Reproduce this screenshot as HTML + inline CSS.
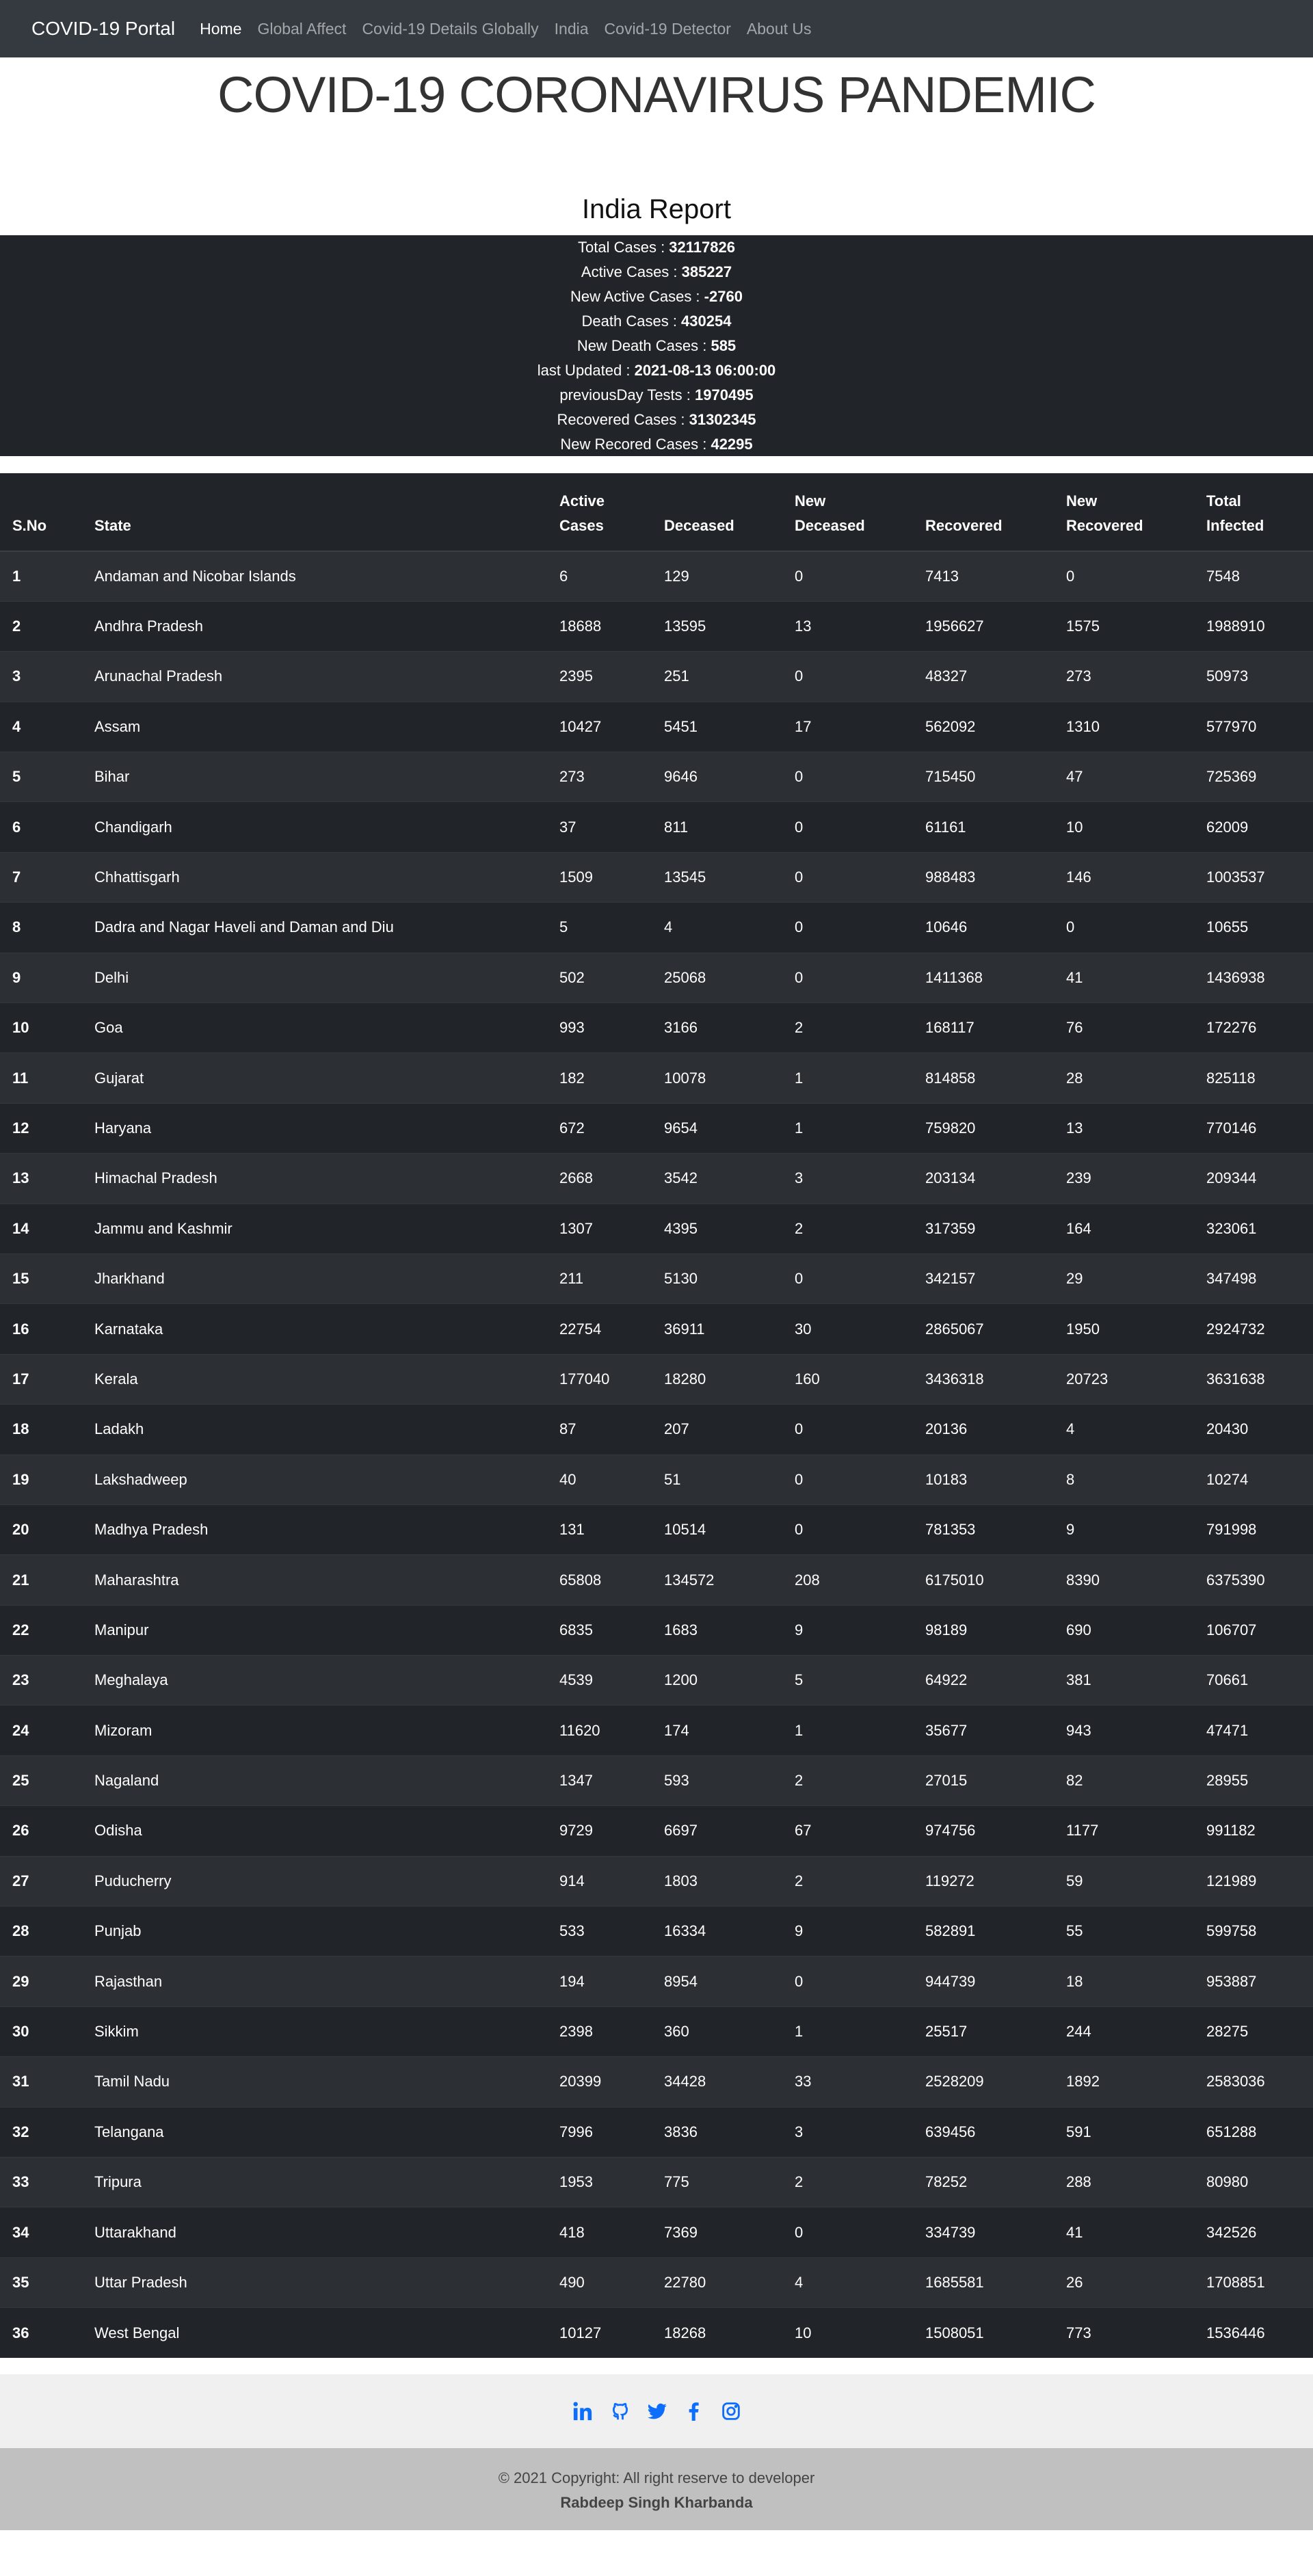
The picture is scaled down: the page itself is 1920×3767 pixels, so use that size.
<!DOCTYPE html>
<html><head><meta charset="utf-8"><style>
*{box-sizing:border-box;margin:0;padding:0}
body{width:1920px;height:3767px;background:#fff;font-family:"Liberation Sans",sans-serif;overflow:hidden}
nav{height:84px;background:#343a40;display:flex;align-items:center;padding-left:46px}
nav .brand{color:#fff;font-size:28px;margin-right:36px}
nav a{color:rgba(255,255,255,.55);font-size:23px;margin-right:23px;text-decoration:none}
nav a.act{color:#fff}
h1{font-weight:300;text-align:center;font-size:74px;color:#333;position:absolute;top:96px;left:0;width:1920px;letter-spacing:-1px}
h2{position:absolute;top:284px;width:1920px;text-align:center;font-weight:500;font-size:40px;color:#111}
.stats{position:absolute;top:344px;width:1920px;height:323px;background:#212529;color:#fff;text-align:center;font-size:22px;line-height:36px}
table{position:absolute;top:692px;left:0;width:1920px;border-collapse:collapse;table-layout:fixed;background:#212529;color:#fff;font-size:22px}
th{text-align:left;vertical-align:bottom;height:114px;padding:0 0 18px 18px;line-height:36px;font-size:22px;border-bottom:2px solid #3a3f44}
td{height:73.4px;padding:0 0 0 18px;border-top:1px solid #32383e}
td:first-child{font-weight:bold}
tbody tr:nth-child(odd){background:#2c3034}
.f1{position:absolute;top:3472px;width:1920px;height:108px;background:#f0f0f0;display:flex;justify-content:center;align-items:center;gap:26px}
.f2{position:absolute;top:3580px;width:1920px;height:120px;background:#c0c0c0;text-align:center;color:#444;font-size:22px;padding-top:26px;line-height:36px}
</style></head><body>
<nav><span class="brand">COVID-19 Portal</span><a class="act">Home</a><a>Global Affect</a><a>Covid-19 Details Globally</a><a>India</a><a>Covid-19 Detector</a><a>About Us</a></nav>
<h1>COVID-19 CORONAVIRUS PANDEMIC</h1>
<h2>India Report</h2>
<div class="stats">
<div>Total Cases : <b>32117826</b></div><div>Active Cases : <b>385227</b></div><div>New Active Cases : <b>-2760</b></div><div>Death Cases : <b>430254</b></div><div>New Death Cases : <b>585</b></div><div>last Updated : <b>2021-08-13 06:00:00</b></div><div>previousDay Tests : <b>1970495</b></div><div>Recovered Cases : <b>31302345</b></div><div>New Recored Cases : <b>42295</b></div>
</div>
<table><colgroup><col style="width:120px"><col style="width:680px"><col style="width:153px"><col style="width:191px"><col style="width:191px"><col style="width:206px"><col style="width:205px"><col style="width:174px"></colgroup>
<thead><tr><th>S.No</th><th>State</th><th>Active<br>Cases</th><th>Deceased</th><th>New<br>Deceased</th><th>Recovered</th><th>New<br>Recovered</th><th>Total<br>Infected</th></tr></thead>
<tbody>
<tr><td>1</td><td>Andaman and Nicobar Islands</td><td>6</td><td>129</td><td>0</td><td>7413</td><td>0</td><td>7548</td></tr>
<tr><td>2</td><td>Andhra Pradesh</td><td>18688</td><td>13595</td><td>13</td><td>1956627</td><td>1575</td><td>1988910</td></tr>
<tr><td>3</td><td>Arunachal Pradesh</td><td>2395</td><td>251</td><td>0</td><td>48327</td><td>273</td><td>50973</td></tr>
<tr><td>4</td><td>Assam</td><td>10427</td><td>5451</td><td>17</td><td>562092</td><td>1310</td><td>577970</td></tr>
<tr><td>5</td><td>Bihar</td><td>273</td><td>9646</td><td>0</td><td>715450</td><td>47</td><td>725369</td></tr>
<tr><td>6</td><td>Chandigarh</td><td>37</td><td>811</td><td>0</td><td>61161</td><td>10</td><td>62009</td></tr>
<tr><td>7</td><td>Chhattisgarh</td><td>1509</td><td>13545</td><td>0</td><td>988483</td><td>146</td><td>1003537</td></tr>
<tr><td>8</td><td>Dadra and Nagar Haveli and Daman and Diu</td><td>5</td><td>4</td><td>0</td><td>10646</td><td>0</td><td>10655</td></tr>
<tr><td>9</td><td>Delhi</td><td>502</td><td>25068</td><td>0</td><td>1411368</td><td>41</td><td>1436938</td></tr>
<tr><td>10</td><td>Goa</td><td>993</td><td>3166</td><td>2</td><td>168117</td><td>76</td><td>172276</td></tr>
<tr><td>11</td><td>Gujarat</td><td>182</td><td>10078</td><td>1</td><td>814858</td><td>28</td><td>825118</td></tr>
<tr><td>12</td><td>Haryana</td><td>672</td><td>9654</td><td>1</td><td>759820</td><td>13</td><td>770146</td></tr>
<tr><td>13</td><td>Himachal Pradesh</td><td>2668</td><td>3542</td><td>3</td><td>203134</td><td>239</td><td>209344</td></tr>
<tr><td>14</td><td>Jammu and Kashmir</td><td>1307</td><td>4395</td><td>2</td><td>317359</td><td>164</td><td>323061</td></tr>
<tr><td>15</td><td>Jharkhand</td><td>211</td><td>5130</td><td>0</td><td>342157</td><td>29</td><td>347498</td></tr>
<tr><td>16</td><td>Karnataka</td><td>22754</td><td>36911</td><td>30</td><td>2865067</td><td>1950</td><td>2924732</td></tr>
<tr><td>17</td><td>Kerala</td><td>177040</td><td>18280</td><td>160</td><td>3436318</td><td>20723</td><td>3631638</td></tr>
<tr><td>18</td><td>Ladakh</td><td>87</td><td>207</td><td>0</td><td>20136</td><td>4</td><td>20430</td></tr>
<tr><td>19</td><td>Lakshadweep</td><td>40</td><td>51</td><td>0</td><td>10183</td><td>8</td><td>10274</td></tr>
<tr><td>20</td><td>Madhya Pradesh</td><td>131</td><td>10514</td><td>0</td><td>781353</td><td>9</td><td>791998</td></tr>
<tr><td>21</td><td>Maharashtra</td><td>65808</td><td>134572</td><td>208</td><td>6175010</td><td>8390</td><td>6375390</td></tr>
<tr><td>22</td><td>Manipur</td><td>6835</td><td>1683</td><td>9</td><td>98189</td><td>690</td><td>106707</td></tr>
<tr><td>23</td><td>Meghalaya</td><td>4539</td><td>1200</td><td>5</td><td>64922</td><td>381</td><td>70661</td></tr>
<tr><td>24</td><td>Mizoram</td><td>11620</td><td>174</td><td>1</td><td>35677</td><td>943</td><td>47471</td></tr>
<tr><td>25</td><td>Nagaland</td><td>1347</td><td>593</td><td>2</td><td>27015</td><td>82</td><td>28955</td></tr>
<tr><td>26</td><td>Odisha</td><td>9729</td><td>6697</td><td>67</td><td>974756</td><td>1177</td><td>991182</td></tr>
<tr><td>27</td><td>Puducherry</td><td>914</td><td>1803</td><td>2</td><td>119272</td><td>59</td><td>121989</td></tr>
<tr><td>28</td><td>Punjab</td><td>533</td><td>16334</td><td>9</td><td>582891</td><td>55</td><td>599758</td></tr>
<tr><td>29</td><td>Rajasthan</td><td>194</td><td>8954</td><td>0</td><td>944739</td><td>18</td><td>953887</td></tr>
<tr><td>30</td><td>Sikkim</td><td>2398</td><td>360</td><td>1</td><td>25517</td><td>244</td><td>28275</td></tr>
<tr><td>31</td><td>Tamil Nadu</td><td>20399</td><td>34428</td><td>33</td><td>2528209</td><td>1892</td><td>2583036</td></tr>
<tr><td>32</td><td>Telangana</td><td>7996</td><td>3836</td><td>3</td><td>639456</td><td>591</td><td>651288</td></tr>
<tr><td>33</td><td>Tripura</td><td>1953</td><td>775</td><td>2</td><td>78252</td><td>288</td><td>80980</td></tr>
<tr><td>34</td><td>Uttarakhand</td><td>418</td><td>7369</td><td>0</td><td>334739</td><td>41</td><td>342526</td></tr>
<tr><td>35</td><td>Uttar Pradesh</td><td>490</td><td>22780</td><td>4</td><td>1685581</td><td>26</td><td>1708851</td></tr>
<tr><td>36</td><td>West Bengal</td><td>10127</td><td>18268</td><td>10</td><td>1508051</td><td>773</td><td>1536446</td></tr>
</tbody></table>
<div class="f1">
<svg width="30" height="30" viewBox="0 0 16 16" fill="#0d6efd"><rect x="1" y="5.5" width="3" height="9.5"/><circle cx="2.5" cy="2.5" r="1.7"/><path d="M6 5.5h2.8v1.4C9.4 5.9 10.4 5.3 11.8 5.3 14.4 5.3 15 7 15 9.3V15h-3V9.9c0-1.2-.2-2.2-1.5-2.2S9 8.7 9 9.9V15H6z"/></svg>
<svg width="28" height="28" viewBox="0 0 16 16" fill="none" stroke="#0d6efd" stroke-width="1.6"><path d="M6 15v-2.5c-2.5.5-3-1-3.5-1.5M10 15v-2.5c0-.7-.2-1.2-.5-1.5 2-.3 4-1 4-4.5 0-1-.3-1.8-1-2.4.2-.6.2-1.4-.1-2.1 0 0-.8-.2-2.4.9a8 8 0 0 0-4 0C4.4 1.8 3.6 2 3.6 2c-.3.7-.3 1.5-.1 2.1-.7.6-1 1.4-1 2.4 0 3.5 2 4.2 4 4.5"/></svg>
<svg width="28" height="28" viewBox="0 0 16 16" fill="#0d6efd"><path d="M5 14.5c6 0 9.3-5 9.3-9.3v-.4c.6-.5 1.2-1 1.6-1.7-.6.3-1.2.4-1.9.5.7-.4 1.2-1 1.4-1.8-.6.4-1.3.6-2.1.8A3.3 3.3 0 0 0 7.7 5.6 9.3 9.3 0 0 1 1 2.200a3.3 3.3 0 0 0 1 4.4c-.5 0-1-.2-1.5-.4 0 1.6 1.1 2.9 2.6 3.2-.5.1-1 .2-1.5.1.4 1.3 1.6 2.3 3.1 2.3A6.6 6.6 0 0 1 0 13.1 9.3 9.3 0 0 0 5 14.5z"/></svg>
<svg width="28" height="28" viewBox="0 0 16 16" fill="#0d6efd"><path d="M9 16V9h2.3l.4-2.7H9V4.6c0-.8.2-1.3 1.3-1.3h1.5V.9C11.5.8 10.6.7 9.6.7 7.5.7 6.1 2 6.1 4.3v2H3.8V9h2.3v7z"/></svg>
<svg width="28" height="28" viewBox="0 0 16 16" fill="none" stroke="#0d6efd" stroke-width="1.6"><rect x="1.5" y="1.5" width="13" height="13" rx="3.5"/><circle cx="8" cy="8" r="3"/><circle cx="12" cy="4" r=".5" fill="#0d6efd"/></svg>
</div>
<div class="f2">© 2021 Copyright: All right reserve to developer<br><b>Rabdeep Singh Kharbanda</b></div>
</body></html>
